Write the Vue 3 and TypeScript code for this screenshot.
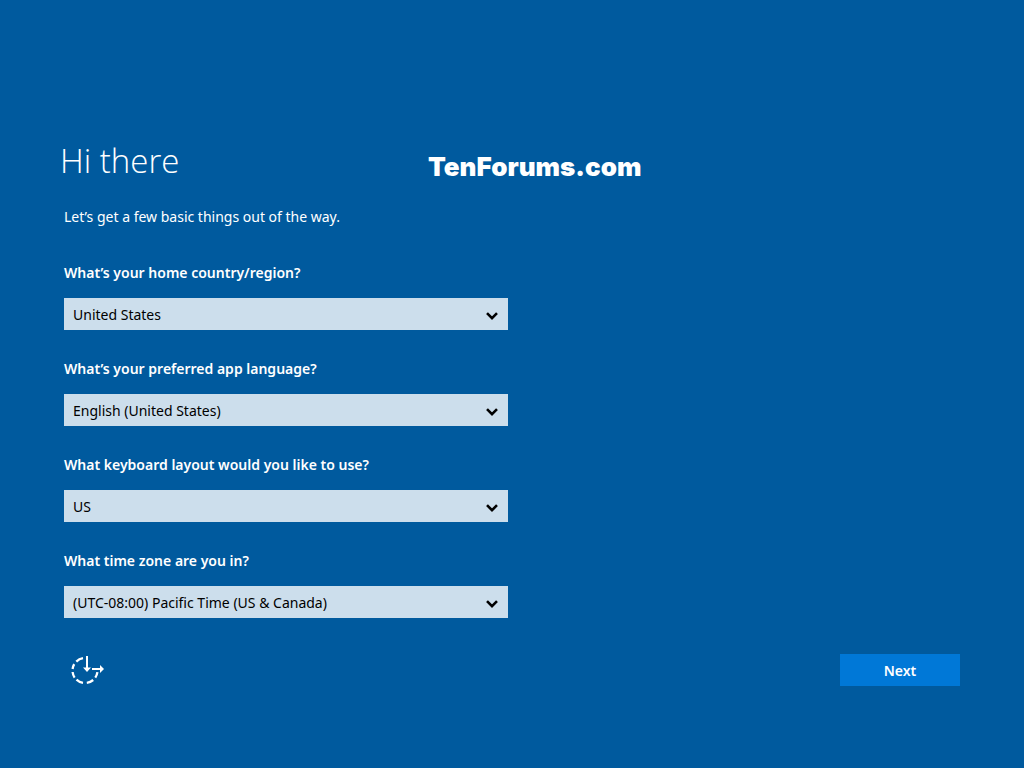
<script setup lang="ts">
import { reactive } from 'vue'

interface Field {
  id: string
  label: string
  options: string[]
}

const fields: Field[] = [
  { id: 'region', label: 'What’s your home country/region?', options: ['United States'] },
  { id: 'language', label: 'What’s your preferred app language?', options: ['English (United States)'] },
  { id: 'keyboard', label: 'What keyboard layout would you like to use?', options: ['US'] },
  { id: 'timezone', label: 'What time zone are you in?', options: ['(UTC-08:00) Pacific Time (US & Canada)'] },
]

const values = reactive<Record<string, string>>(
  Object.fromEntries(fields.map((f) => [f.id, f.options[0]])),
)
</script>

<template>
  <main class="setup">
    <header class="head">
      <h1 class="title">Hi there</h1>
      <span class="brand">TenForums.com</span>
    </header>
    <p class="intro">Let’s get a few basic things out of the way.</p>

    <form class="form" @submit.prevent>
      <div v-for="f in fields" :key="f.id" class="field">
        <label class="label" :for="f.id">{{ f.label }}</label>
        <div class="box">
          <select :id="f.id" v-model="values[f.id]" class="select">
            <option v-for="o in f.options" :key="o" :value="o">{{ o }}</option>
          </select>
          <svg class="chevron" viewBox="0 0 12 10" aria-hidden="true">
            <path d="M1 2.2 L6 7.2 L11 2.2" fill="none" stroke="#000" stroke-width="2.6" />
          </svg>
        </div>
      </div>

      <footer class="foot">
        <button type="button" class="ease" aria-label="Ease of access">
          <svg viewBox="0 0 34 30" width="34" height="30" fill="none" stroke="#fff" aria-hidden="true">
            <path
              d="M12 3.2A12.5 12.5 0 0 0 5.3 6.6M3.2 9.2A12.5 12.5 0 0 0 1.6 14M1.6 17A12.5 12.5 0 0 0 3.6 22.6M5.5 24.6A12.5 12.5 0 0 0 12 27.8M15.8 27.8A12.5 12.5 0 0 0 22.2 25M24.3 22.6A12.5 12.5 0 0 0 26.4 17.2"
              stroke-width="2.3"
            />
            <path d="M16 1V14M21 14H30" stroke-width="2" />
            <path d="M12 12.5H20L16 17ZM29 10L33 14L29 18Z" fill="#fff" stroke="none" />
          </svg>
        </button>
        <button type="submit" class="next">Next</button>
      </footer>
    </form>
  </main>
</template>

<style>
body {
  margin: 0;
  background: #005a9e;
}
</style>

<style scoped>
.setup {
  box-sizing: border-box;
  min-height: 100vh;
  padding: 137px 64px 80px;
  background: #005a9e;
  color: #fff;
  font-family: 'Noto Sans', 'Open Sans', sans-serif;
  font-size: 14px;
  line-height: 20px;
}
.head {
  display: grid;
  grid-template-columns: 364px 1fr;
  align-items: center;
  height: 48px;
}
.title {
  margin: 0 0 0 -4px;
  font-family: 'Open Sans', sans-serif;
  font-size: 33px;
  font-weight: 300;
  line-height: 48px;
}
.brand {
  padding-top: 12px;
  font-family: Inter, sans-serif;
  font-size: 26px;
  font-weight: 900;
  line-height: 36px;
}
.intro {
  margin: 22px 0 36px;
}
.form {
  display: flex;
  flex-direction: column;
  gap: 28px;
}
.field {
  display: flex;
  flex-direction: column;
  gap: 15px;
  max-width: 444px;
}
.field + .field {
  padding-top: 1px;
}
.label {
  font-weight: 600;
}
.box {
  display: grid;
  align-items: center;
}
.box > * {
  grid-area: 1 / 1;
}
.select {
  appearance: none;
  width: 100%;
  height: 32px;
  padding: 1px 32px 0 9px;
  border: 0;
  border-radius: 0;
  background: #ccdeec;
  color: #000;
  font: inherit;
}
.chevron {
  justify-self: end;
  width: 12px;
  height: 10px;
  margin: 4px 10px 0 0;
  pointer-events: none;
}
.foot {
  display: flex;
  justify-content: space-between;
  align-items: center;
  margin-top: 8px;
  height: 32px;
}
.ease {
  display: flex;
  margin-left: 7px;
  padding: 0;
  border: 0;
  background: none;
}
.next {
  width: 120px;
  height: 32px;
  padding: 1px 0 0;
  border: 0;
  background: #0078d7;
  color: #fff;
  font: inherit;
  font-weight: 600;
}
</style>
